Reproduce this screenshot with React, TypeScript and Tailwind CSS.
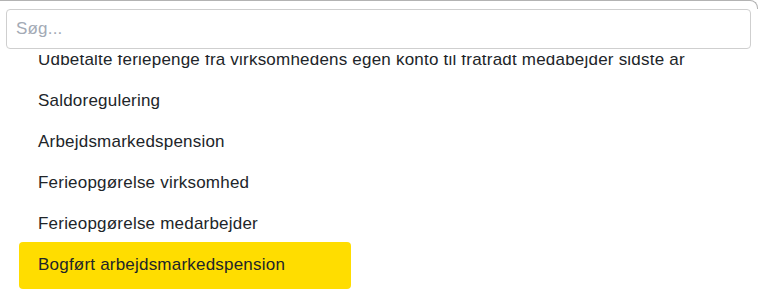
import React from "react";

const items = [
  "Udbetalte feriepenge fra virksomhedens egen konto til fratrådt medabejder sidste år",
  "Saldoregulering",
  "Arbejdsmarkedspension",
  "Ferieopgørelse virksomhed",
  "Ferieopgørelse medarbejder",
  "Bogført arbejdsmarkedspension",
];

export default function App() {
  return (
    <div
      className="w-[760px] h-[294px] overflow-hidden bg-white flex flex-col"
      style={{ fontFamily: '"Liberation Sans", Arial, sans-serif' }}
    >
      <div className="h-[9px] shrink-0 border-t border-r border-[#b3b3b3] rounded-tr-[8px] mr-[2px]" />
      <div className="ml-[6px] mr-[9px] shrink-0">
        <input
          type="text"
          placeholder="Søg..."
          className="w-full h-[40px] border border-[#cfcfcf] rounded-[4px] pl-[9px] text-[17px] tracking-[0.2px] text-[#212529] placeholder:text-[#a3aab5] outline-none"
        />
      </div>
      <div className="mt-[6px] flex-1 overflow-hidden">
        <ul className="-mt-[15.5px] pl-[19px]">
          {items.map((t, i) => {
            const last = i === items.length - 1;
            return (
              <li
                key={t}
                className={
                  last
                    ? "h-[47px] -mt-[3px] w-[332px] bg-[#ffdd00] rounded-[4px] pl-[19px] flex items-center text-[17px] tracking-[0.21px] text-[#212529] whitespace-nowrap"
                    : "h-[41px] pl-[19px] flex items-center text-[17px] tracking-[0.21px] text-[#212529] whitespace-nowrap"
                }
              >
                {t}
              </li>
            );
          })}
        </ul>
      </div>
    </div>
  );
}
